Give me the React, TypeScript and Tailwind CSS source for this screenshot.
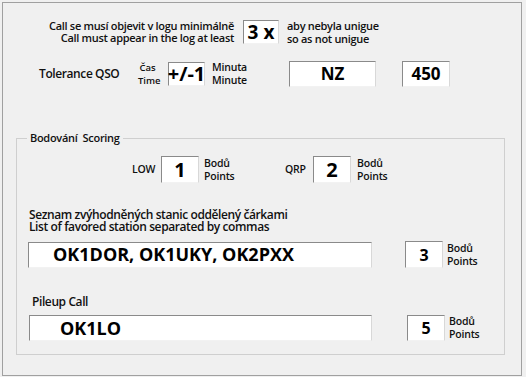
import React from 'react';

const field =
  'bg-white border border-t-[#8a8a8a] border-l-[#8a8a8a] border-r-[#d8d8d8] border-b-[#f2f2f2] flex items-center text-black font-bold';

function Pts({ className = '' }: { className?: string }) {
  return (
    <div className={`text-[10.5px] leading-[13px] font-semibold tracking-[-0.2px] ${className}`}>
      <div>Bodů</div>
      <div>Points</div>
    </div>
  );
}

export default function App() {
  return (
    <div className="w-[526px] h-[377px] bg-[#f0f0f0] p-[2px] font-['Open_Sans',sans-serif] text-[#111]">
      <div className="w-[520px] h-[374px] border border-[#a0a0a0]">
        {/* minimální počet */}
        <div className="mt-[16px] flex items-center">
          <div className="w-[231px] text-right text-[11px] leading-[12px] font-semibold tracking-[-0.3px]">
            <div>Call se musí objevit v logu minimálně</div>
            <div>Call must appear in the log at least</div>
          </div>
          <div className={`${field} ml-[9px] w-[36px] h-[24px] justify-center text-[19px]`}>3 x</div>
          <div className="ml-[8px] text-[11px] leading-[13px] font-semibold tracking-[-0.3px]">
            <div>aby nebyla unigue</div>
            <div>so as not unigue</div>
          </div>
        </div>

        {/* tolerance */}
        <div className="mt-[16px] flex items-center h-[26px]">
          <div className="ml-[36px] w-[99px] text-[12px] font-semibold tracking-[-0.4px] whitespace-nowrap">Tolerance QSO</div>
          <div className="w-[19px] text-center text-[9.5px] leading-[13px] font-semibold whitespace-nowrap">
            <div>Čas</div>
            <div>Time</div>
          </div>
          <div className={`${field} ml-[11px] w-[37px] h-[24px] justify-center text-[20px]`}>+/-1</div>
          <div className="ml-[7px] w-[77px] text-[10.5px] leading-[13px] font-semibold tracking-[-0.2px]">
            <div>Minuta</div>
            <div>Minute</div>
          </div>
          <div className={`${field} w-[87px] h-[26px] justify-center text-[17px]`}>NZ</div>
          <div className={`${field} ml-[26px] w-[48px] h-[26px] justify-center text-[17px]`}>450</div>
        </div>

        {/* Bodování */}
        <div className="relative mt-[51px] ml-[13px] w-[489px] h-[217px] border border-[#cfcfcf]">
          <div className="absolute left-[10px] top-[-9px] px-[3px] bg-[#f0f0f0] text-[11px] leading-[16px] font-semibold tracking-[-0.3px] whitespace-pre">
            Bodování  Scoring
          </div>

          <div className="mt-[17px] flex items-center h-[27px]">
            <div className="ml-[115px] w-[29px] text-[10.5px] font-semibold tracking-[-0.2px]">LOW</div>
            <div className={`${field} w-[38px] h-[27px] justify-center text-[20px]`}>1</div>
            <Pts className="ml-[5px] w-[81px]" />
            <div className="w-[28px] text-[10.5px] font-semibold tracking-[-0.2px]">QRP</div>
            <div className={`${field} w-[38px] h-[27px] justify-center text-[20px]`}>2</div>
            <Pts className="ml-[6px]" />
          </div>

          <div className="mt-[26px] ml-[12px] text-[12px] leading-[12px] font-semibold tracking-[-0.4px]">
            <div>Seznam zvýhodněných stanic oddělený čárkami</div>
            <div>List of favored station separated by commas</div>
          </div>
          <div className="mt-[8px] flex items-center">
            <div className={`${field} ml-[11px] w-[344px] h-[26px] pl-[24px] text-[18px]`}>OK1DOR, OK1UKY, OK2PXX</div>
            <div className={`${field} ml-[33px] w-[38px] h-[27px] justify-center text-[16px]`}>3</div>
            <Pts className="ml-[4px]" />
          </div>

          <div className="mt-[26px] ml-[15px] text-[12px] leading-[16px] font-semibold tracking-[-0.4px]">Pileup Call</div>
          <div className="mt-[5px] flex items-center">
            <div className={`${field} ml-[12px] w-[343px] h-[26px] pl-[30px] text-[18px]`}>OK1LO</div>
            <div className={`${field} ml-[35px] w-[38px] h-[26px] justify-center text-[16px]`}>5</div>
            <Pts className="ml-[4px]" />
          </div>
        </div>
      </div>
    </div>
  );
}
